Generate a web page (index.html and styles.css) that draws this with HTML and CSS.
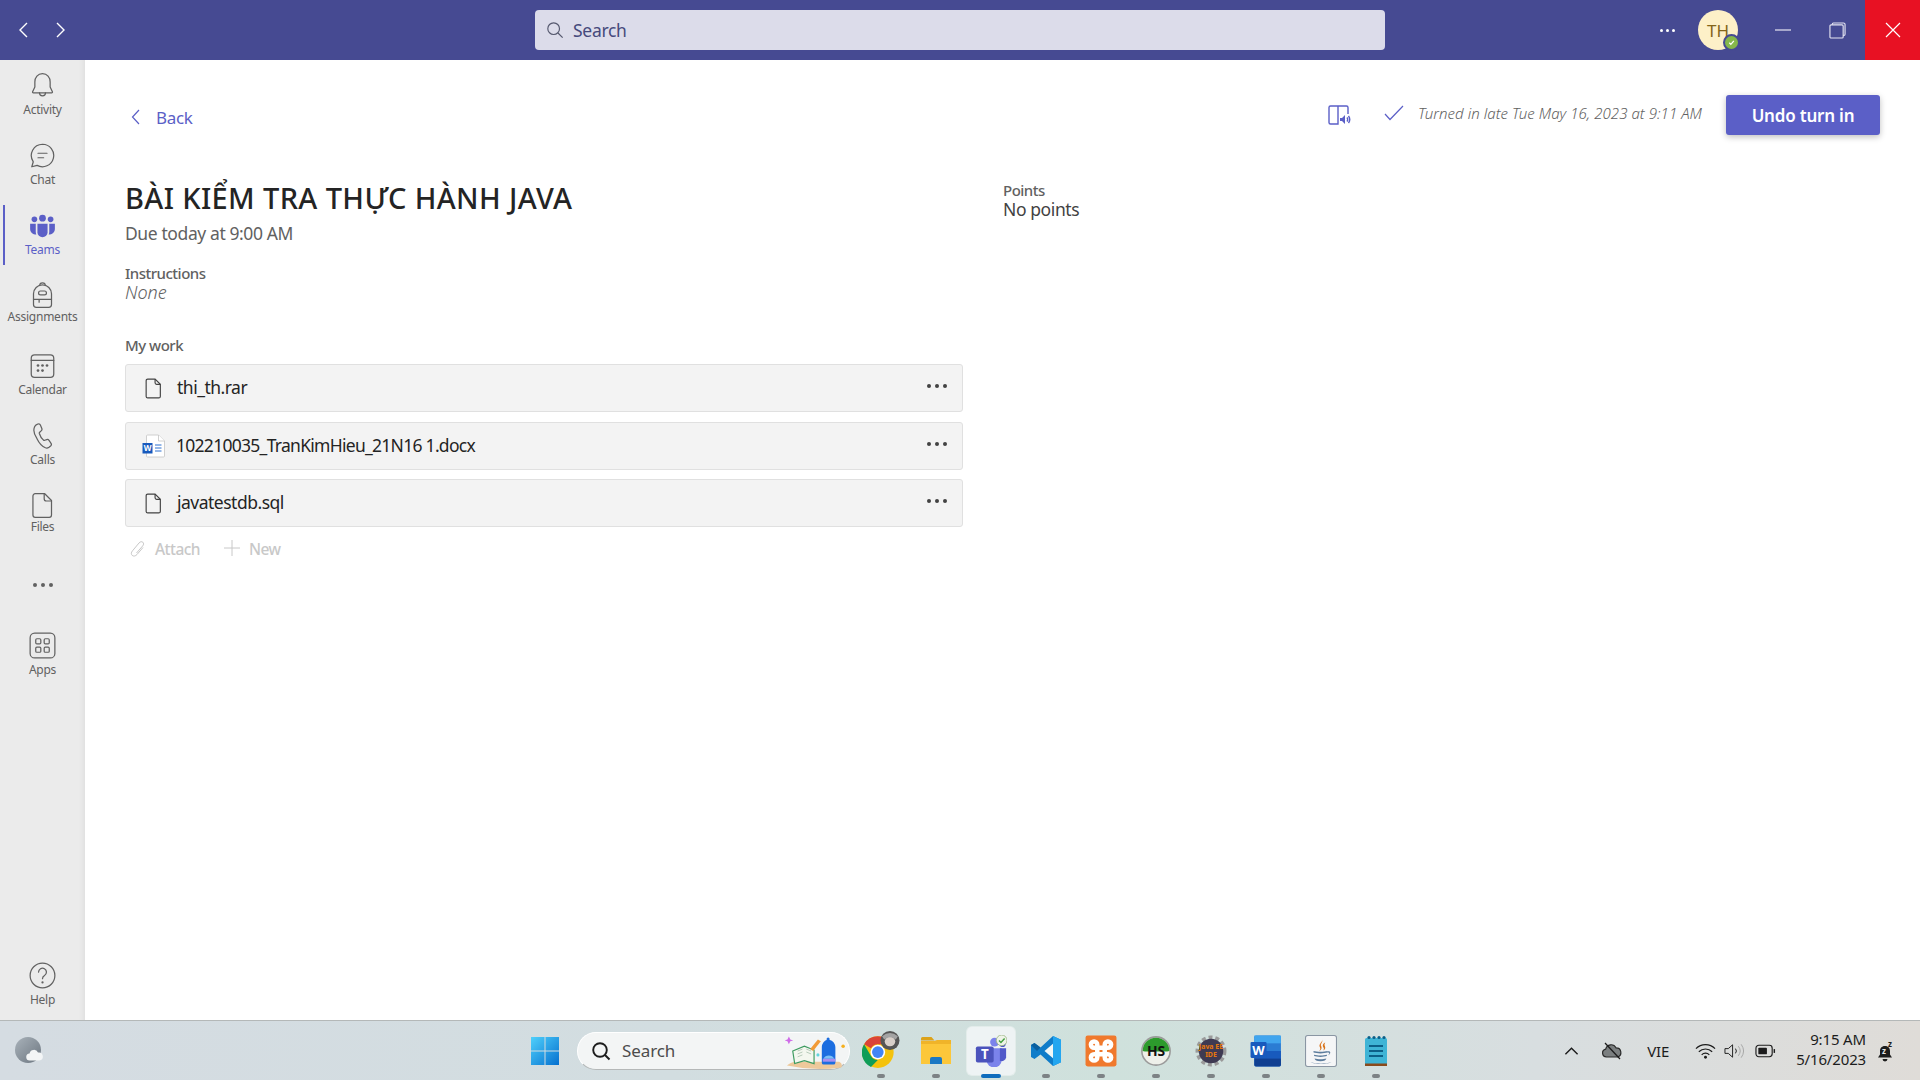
FILE: index.html
```html
<!DOCTYPE html>
<html lang="en">
<head>
<meta charset="utf-8">
<title>Assignment</title>
<link rel="stylesheet" href="styles.css">
</head>
<body>
<div class="window">
  <header class="topbar">
    <div class="nav">
      <svg class="nav-ic" viewBox="0 0 16 24"><path d="M11 5 L4 12 L11 19"/></svg>
      <svg class="nav-ic" viewBox="0 0 16 24"><path d="M5 5 L12 12 L5 19"/></svg>
    </div>
    <div class="search">
      <svg class="search-ic" viewBox="0 0 20 20"><circle cx="8.5" cy="8.5" r="6.5"/><path d="M13.3 13.3 L18.5 18.5"/></svg>
      <span>Search</span>
    </div>
    <div class="win-right">
      <div class="dots-top"><i></i><i></i><i></i></div>
      <div class="avatar">TH<span class="presence"><svg viewBox="0 0 10 10"><path d="M2.5 5.2 L4.3 7 L7.6 3.2"/></svg></span></div>
      <div class="ctl min"><svg viewBox="0 0 16 16"><path d="M0 8h16"/></svg></div>
      <div class="ctl"><svg viewBox="0 0 18 18"><path d="M3.5 3V2.2A1.2 1.2 0 0 1 4.7 1h10.6A1.7 1.7 0 0 1 17 2.7V13a1.2 1.2 0 0 1-1.2 1.2H15"/><rect x="1" y="3" width="14" height="14" rx="1.2"/></svg></div>
      <div class="ctl close"><svg viewBox="0 0 16 16"><path d="M1 1L15 15M15 1L1 15"/></svg></div>
    </div>
  </header>

  <div class="middle">
    <nav class="rail">
      <div class="rail-item"><svg class="rail-ic" viewBox="0 0 24 24"><path d="M12 1.5c-4.2 0-6.8 3.2-6.8 7.3v4.6l-2 4.1c-.2.5.1 1 .6 1h16.4c.5 0 .8-.5.6-1l-2-4.1V8.800c0-4.100-2.600-7.300-6.800-7.300z"/><path d="M9.300 18.500a2.700 2.700 0 0 0 5.400 0"/></svg><span>Activity</span></div>
      <div class="rail-item"><svg class="rail-ic" viewBox="0 0 24 24"><path d="M12 2a10 10 0 1 1-4.800 18.800L2.500 22l1.300-4.400A10 10 0 0 1 12 2z"/><path d="M8 10h8M8 14h5"/></svg><span>Chat</span></div>
      <div class="rail-item active"><svg class="rail-ic filled" viewBox="0 0 24 24"><circle cx="12" cy="5.500" r="3"/><circle cx="4.800" cy="6.500" r="2.500"/><circle cx="19.200" cy="6.500" r="2.500"/><path d="M7.500 10.500h9v7.500a4.500 4.500 0 0 1-9 0z"/><path d="M1 10.500h5v7c0 1 .2 1.800.5 2.500C3.500 20 1 18 1 15z"/><path d="M23 10.500h-5v7c0 1-.2 1.800-.5 2.500 3 0 5.500-2 5.500-5z"/></svg><span>Teams</span></div>
      <div class="rail-item tight"><svg class="rail-ic" viewBox="0 0 24 24"><path d="M4 10.500a8 8 0 0 1 16 0V20a2.500 2.500 0 0 1-2.500 2.500h-11A2.500 2.500 0 0 1 4 20z"/><path d="M9.500 3.200a2.500 2.500 0 0 1 5 0"/><rect x="8.500" y="8" width="7" height="3.500" rx="1.700"/><path d="M4 15.500h16M9 15.500v2.500"/></svg><span>Assignments</span></div>
      <div class="rail-item"><svg class="rail-ic" viewBox="0 0 24 24"><rect x="2" y="2.500" width="20" height="20" rx="3"/><path d="M2 7.500h20"/><g class="ic-dots"><circle cx="8" cy="12" r="1.200"/><circle cx="12" cy="12" r="1.200"/><circle cx="16" cy="12" r="1.200"/><circle cx="8" cy="16.500" r="1.200"/><circle cx="12" cy="16.500" r="1.200"/></g></svg><span>Calendar</span></div>
      <div class="rail-item"><svg class="rail-ic" viewBox="0 0 24 24"><path d="M6 2.800l1.900-1c.9-.4 1.800-.1 2.200.8l1.300 3.100c.3.800.1 1.500-.4 2l-1.500 1.400c-.3.300-.4.700-.3 1.100.5 1.700 2.300 4.700 3.700 5.900.3.200.7.300 1.100.1l1.800-.6c.8-.2 1.500 0 2 .7l1.800 2.700c.5.800.3 1.700-.4 2.300l-1.400 1.100c-1 .7-2.200.9-3.200.5-3.200-1.400-5.800-4.600-7.500-8.100C4.500 11 3.700 7.300 4.900 4.500c.2-.7.600-1.300 1.100-1.700z"/></svg><span>Calls</span></div>
      <div class="rail-item tight"><svg class="rail-ic" viewBox="0 0 24 24"><path d="M5.500 1.500h8.500l6 6v13a2 2 0 0 1-2 2H5.500a2 2 0 0 1-2-2v-17a2 2 0 0 1 2-2z"/><path d="M13.500 1.500v4.500a2 2 0 0 0 2 2H20"/></svg><span>Files</span></div>
      <div class="rail-item"><div class="dots-rail"><i></i><i></i><i></i></div></div>
      <div class="rail-item"><svg class="rail-ic" viewBox="0 0 24 24"><rect x="1" y="1" width="22" height="22" rx="4"/><rect x="6" y="6" width="4.500" height="4.500" rx="1"/><rect x="13.500" y="6" width="4.500" height="4.500" rx="1"/><rect x="6" y="13.500" width="4.500" height="4.500" rx="1"/><rect x="13.500" y="13.500" width="4.500" height="4.500" rx="1"/></svg><span>Apps</span></div>
      <div class="rail-item help"><svg class="rail-ic" viewBox="0 0 24 24"><circle cx="12" cy="12" r="11"/><path d="M8.500 9a3.500 3.500 0 1 1 5.300 3c-1.200.7-1.800 1.400-1.800 2.800"/><circle class="ic-solid" cx="12" cy="18.200" r="1"/></svg><span>Help</span></div>
    </nav>

    <main class="content">
      <div class="head">
        <div class="back">
          <svg class="back-ic" viewBox="0 0 12 18"><path d="M9 2 L2.500 9 L9 16"/></svg>
          <span>Back</span>
        </div>
        <div class="head-right">
          <svg class="reader-ic" viewBox="0 0 24 24"><path d="M11 21H3.500A1.500 1.500 0 0 1 2 19.500v-15A1.500 1.500 0 0 1 3.500 3H11v18zM11 3h8.500A1.500 1.500 0 0 1 21 4.500V11"/><path class="solid" d="M13 15h2l3-3v9l-3-3h-2z"/><path d="M20 14.500a3.500 3.500 0 0 1 0 4M21.500 13a6 6 0 0 1 0 7"/></svg>
          <svg class="check-ic" viewBox="0 0 20 16"><path d="M1 9 L6 14.500 L19 1"/></svg>
          <span class="turned">Turned in late Tue May 16, 2023 at 9:11 AM</span>
          <button class="undo">Undo turn in</button>
        </div>
      </div>

      <div class="body">
        <section class="left">
          <h1>BÀI KIỂM TRA THỰC HÀNH JAVA</h1>
          <p class="due">Due today at 9:00 AM</p>
          <p class="label instr">Instructions</p>
          <p class="none">None</p>
          <p class="label mywork">My work</p>
          <div class="files">
            <div class="file">
              <svg class="file-ic" viewBox="0 0 16 20"><path d="M2.500 1h7l5 5v11.500a1.500 1.500 0 0 1-1.500 1.500H2.500A1.500 1.500 0 0 1 1 17.500v-15A1.500 1.500 0 0 1 2.500 1z"/><path d="M9.500 1v3.500A1.500 1.500 0 0 0 11 6h3.500"/></svg>
              <span class="fname">thi_th.rar</span>
              <div class="dots-file"><i></i><i></i><i></i></div>
            </div>
            <div class="file">
              <svg class="word-ic" viewBox="0 0 24 24"><path class="pg" d="M5.500 1h11l6 6v15a1 1 0 0 1-1 1h-16a1 1 0 0 1-1-1V2a1 1 0 0 1 1-1z"/><path class="pg" d="M16.500 1v6h6"/><path class="ln" d="M13 11h6.500M13 14h6.500M13 17h6.500"/><rect class="bx" x="0.500" y="9" width="10" height="10.500"/><text class="w" x="5.500" y="17.200">W</text></svg>
              <span class="fname long">102210035_TranKimHieu_21N16 1.docx</span>
              <div class="dots-file"><i></i><i></i><i></i></div>
            </div>
            <div class="file">
              <svg class="file-ic" viewBox="0 0 16 20"><path d="M2.500 1h7l5 5v11.500a1.500 1.500 0 0 1-1.500 1.500H2.500A1.500 1.500 0 0 1 1 17.500v-15A1.500 1.500 0 0 1 2.500 1z"/><path d="M9.500 1v3.500A1.500 1.500 0 0 0 11 6h3.500"/></svg>
              <span class="fname">javatestdb.sql</span>
              <div class="dots-file"><i></i><i></i><i></i></div>
            </div>
          </div>
          <div class="actions">
            <svg class="attach-ic" viewBox="0 0 16 18"><path d="M13 7.500 L7 14.500c-1.500 1.700-3.500 2-4.800.9C1 14.300 1 12.500 2.500 10.800L9 3c1.200-1.400 2.700-1.700 3.800-.8 1.100.9 1 2.400-.1 3.700L6.500 13"/></svg>
            <span class="act-text">Attach</span>
            <svg class="plus-ic" viewBox="0 0 16 16"><path d="M8 0v16M0 8h16"/></svg>
            <span class="act-text">New</span>
          </div>
        </section>
        <aside class="right">
          <p class="label">Points</p>
          <p class="points">No points</p>
        </aside>
      </div>
    </main>
  </div>

  <footer class="taskbar">
    <div class="tb-left">
      <svg class="weather" viewBox="0 0 28 28"><defs><linearGradient id="wg" x1="0" y1="0" x2="1" y2="1"><stop offset="0" stop-color="#a9b2ba"/><stop offset="1" stop-color="#6c7680"/></linearGradient></defs><circle cx="13" cy="13" r="13" fill="url(#wg)"/><path d="M15 23.500a3.500 3.500 0 0 1-.5-7 4.500 4.500 0 0 1 8.500-1 4 4 0 0 1 1.500 8z" fill="#f3f5f6"/></svg>
    </div>
    <div class="tb-center">
      <div class="tile"><svg class="app start" viewBox="0 0 30 30"><defs><linearGradient id="st" x1="0" y1="0" x2="1" y2="1"><stop offset="0" stop-color="#4fd0fb"/><stop offset="1" stop-color="#0570cf"/></linearGradient></defs><path fill="url(#st)" d="M1 1h13.500v13.500H1zM15.500 1H29v13.500H15.500zM1 15.500h13.500V29H1zM15.500 15.500H29V29H15.500z"/></svg></div>
      <div class="tb-search">
        <svg class="tbs-ic" viewBox="0 0 20 20"><circle cx="9" cy="9" r="6.800"/><path d="M14 14 L18.500 18.500"/></svg>
        <span class="tbs-text">Search</span>
        <svg class="tbs-art" viewBox="0 0 64 36"><path d="M2 32 Q6 28 12 28 H56 Q60 30 58 34 Q30 38 2 32z" fill="#eec99b"/><path d="M8 17 L20 12 L30 16 L30 30 L20 27 L10 30z" fill="#f4f7ef" stroke="#3c9a5f" stroke-width="1.200"/><path d="M13 17l5-2M13 20l5-2M13 23l5-2M22 15l5 2M22 18l5 2" stroke="#9ab5a0" stroke-width=".7" fill="none"/><path d="M26 15 L34 5 L37 7 L29 17z" fill="#f29b37"/><path d="M4 2 l1.500 3 3 1-3 1-1.500 3-1.500-3-3-1 3-1z" fill="#cf6ce8"/><circle cx="34" cy="21" r="1.600" fill="#62d4dd"/><circle cx="60" cy="12" r="1.800" fill="#f6b01d"/><path d="M38 29V13c0-4 3-7 5-7.500V4a2 2 0 0 1 3 0v1.500c3 .5 6 3.500 6 7.500v16a2 2 0 0 1-2 2H40a2 2 0 0 1-2-2z" fill="#1c6ee0"/><path d="M39.500 25a6.500 6.500 0 0 1 11.500 0z" fill="#7cc0f5"/><rect x="39" y="25" width="13" height="3" fill="#a98ef0"/></svg>
      </div>
      <div class="tile run">
        <svg class="app chrome" viewBox="0 0 36 36"><circle cx="15" cy="20" r="15" fill="#f4c20d"/><path d="M15 5a15 15 0 0 1 13 7.500H15a7.500 7.500 0 0 0-6.500 3.800L2 12.500A15 15 0 0 1 15 5z" fill="#db4437"/><path d="M2 12.500l6.500 11.200a7.500 7.500 0 0 0 6.500 3.800L8.500 34A15 15 0 0 1 2 12.500z" fill="#0f9d58"/><circle cx="15" cy="20" r="7" fill="#fff"/><circle cx="15" cy="20" r="5.500" fill="#4285f4"/><circle cx="26.500" cy="9" r="9" fill="#555"/><ellipse cx="26.500" cy="10" rx="5" ry="4.500" fill="#d8cfc9"/><path d="M19 5 Q26.500 -1 34 5 L32 8 Q26.500 4 21 8z" fill="#a3a3a3"/></svg>
      </div>
      <div class="tile run">
        <svg class="app" viewBox="0 0 32 32"><path d="M1 3.500A1.500 1.500 0 0 1 2.500 2h9l3 3.500H1z" fill="#dca21a"/><path d="M1 6h30v23H1z" fill="#fcc73a"/><path d="M1 6h13l3-1h14v4H1z" fill="#f0b429"/><path d="M10 29v-5a2 2 0 0 1 2-2h8a2 2 0 0 1 2 2v5z" fill="#1b78c4"/></svg>
      </div>
      <div class="tile run open">
        <svg class="app" viewBox="0 0 36 36"><circle cx="22" cy="8" r="5" fill="#7b83eb"/><circle cx="31" cy="10" r="3.500" fill="#5059c9"/><path d="M13 15h17v13a8 8 0 0 1-17 0z" fill="#7b83eb"/><path d="M28 15h7v10a5 5 0 0 1-7 4z" fill="#5059c9"/><rect x="1" y="13" width="20" height="18" rx="2" fill="#4b53bc"/><text class="t-t" x="11" y="27">T</text><circle cx="30" cy="6" r="6" fill="#eef3e8" stroke="#9fb98a"/><path d="M27 6.200l2.200 2.200L33.300 4" fill="none" stroke="#3f9f3f" stroke-width="1.600"/></svg>
      </div>
      <div class="tile run">
        <svg class="app" viewBox="0 0 32 32"><path d="M23 1 L31 4.800 V27.200 L23 31 L10.500 19.500 L4.500 24 L1 22 V10 L4.500 8 L10.500 12.500z" fill="#0f7cc9"/><path d="M23 8.800 L14.500 16 L23 23.200z" fill="#f1f7f7"/><path d="M23 1 L31 4.800 V27.200 L23 31z" fill="#23a6f0"/><path d="M1 10 L4.500 8 L10.500 12.500 L7 16 z" fill="#0a5f9e"/></svg>
      </div>
      <div class="tile run">
        <svg class="app" viewBox="0 0 30 30"><rect x="0.500" y="0.500" width="29" height="29" rx="2" fill="#f0792d"/><path d="M11.500 11.500V9a3 3 0 1 0-3 3H21.500a3 3 0 1 0-3-3V21a3 3 0 1 0 3-3H8.500a3 3 0 1 0 3 3z" fill="none" stroke="#fff" stroke-width="4.200"/></svg>
      </div>
      <div class="tile run">
        <svg class="app" viewBox="0 0 30 30"><circle cx="15" cy="15" r="14" fill="#9a9a9a"/><circle cx="15" cy="15" r="12.500" fill="#eef0ea"/><path d="M2.500 15a12.500 12.500 0 0 1 25 0l-2 .5h-21z" fill="#2c9a2c"/><text class="hs" x="15" y="20">HS</text></svg>
      </div>
      <div class="tile run">
        <svg class="app" viewBox="0 0 30 30"><circle cx="15" cy="15" r="12" fill="none" stroke="#9a9a9a" stroke-width="5" stroke-dasharray="3.500 2.500"/><circle cx="15" cy="15" r="11.500" fill="#3e3a52"/><text class="je" x="15" y="13.500">Java EE</text><text class="je" x="15" y="21">IDE</text></svg>
      </div>
      <div class="tile run">
        <svg class="app" viewBox="0 0 30 30"><rect x="4" y="0.500" width="25" height="29" rx="1.500" fill="#2b7cd3"/><rect x="4" y="0.500" width="25" height="7.300" fill="#41a5ee"/><rect x="4" y="15" width="25" height="7.300" fill="#185abd"/><path d="M4 22h25v6a1.500 1.500 0 0 1-1.500 1.500h-22A1.500 1.500 0 0 1 4 28z" fill="#103f91"/><rect x="0.500" y="6.500" width="15" height="15" rx="1" fill="#185abd"/><text class="wd" x="8" y="18.500">W</text></svg>
      </div>
      <div class="tile run">
        <svg class="app" viewBox="0 0 30 30"><rect x="0.500" y="0.500" width="29" height="29" rx="2" fill="#f5f6f7" stroke="#8a96a3"/><path d="M16 3c2 3-4 5-2 8.500 1 1.500-.3 3-.8 3.500 3-1.500 2.500-3.500 1.800-5 -.8-2 2.500-3.500 1-7zM19 7c-3 1.500-2.500 3.500-1.500 5 .5 1 0 2-.5 2.500 2-1 2.500-2.500 1.500-4.500-.5-1 0-2 .5-3z" fill="#d9731a"/><path d="M8 15c3 1 10 1 13 0v1.500c-3 1-10 1-13 0zM8.500 18.500c3 1 9 1 12 0v1.300c-3 1-9 1-12 0zM9 22c3 1 8 1 11 0 0 1.500-2 2.500-5.500 2.500S9 23.500 9 22zM21 15.500c3-1 4 2 .5 3.500 2-1.500 1.500-3-.5-2.500zM5 25.500c6 1.500 14 1.500 20 0-5 2-15 2-20 0z" fill="#5c7c9c"/></svg>
      </div>
      <div class="tile run">
        <svg class="app" viewBox="0 0 24 32"><rect x="1" y="3" width="22" height="27" rx="1.500" fill="#3fb4d6"/><rect x="1" y="28.500" width="22" height="2.500" fill="#8a4a1c"/><g fill="#0c5f88"><circle cx="5" cy="2.500" r="1.600"/><circle cx="10" cy="2.500" r="1.600"/><circle cx="15" cy="2.500" r="1.600"/><circle cx="20" cy="2.500" r="1.600"/><rect x="5" y="10" width="14" height="2"/><rect x="5" y="15" width="14" height="2"/><rect x="5" y="20" width="14" height="2"/></g></svg>
      </div>
    </div>
    <div class="tb-right">
      <svg class="tray chev" viewBox="0 0 16 10"><path d="M1.500 8.500 L8 2 L14.500 8.500"/></svg>
      <svg class="tray cloud" viewBox="0 0 22 18"><path class="cl" d="M5.500 15a4 4 0 0 1-.8-7.900 5.500 5.500 0 0 1 10.300-1.300A4.700 4.700 0 0 1 16.500 15z"/><path d="M4 1 L19 17"/></svg>
      <span class="lang">VIE</span>
      <svg class="tray wifi" viewBox="0 0 22 18"><path d="M1 6.500a14 14 0 0 1 20 0M4 9.800a10 10 0 0 1 14 0M7 13a5.500 5.500 0 0 1 8 0"/><circle class="w-dot" cx="11" cy="15.500" r="1.500"/></svg>
      <svg class="tray vol" viewBox="0 0 22 18"><path d="M1 6.500h3.500L9 2.500v13L4.500 11.500H1z"/><path d="M12 6.500a4 4 0 0 1 0 5"/><path class="faint" d="M15 4a8 8 0 0 1 0 10M18 2a12 12 0 0 1 0 14"/></svg>
      <svg class="tray batt" viewBox="0 0 22 14"><rect x="1" y="1" width="17" height="12" rx="3"/><rect class="fill" x="3.500" y="3.500" width="9" height="7" rx="1"/><path class="fill" d="M19.500 5h1.500v4h-1.500z"/></svg>
      <div class="clock"><span>9:15 AM</span><span>5/16/2023</span></div>
      <svg class="tray bell" viewBox="0 -4 18 28"><path class="bl" d="M9 5c-3.500 0-5 2.500-5 5v3.500L2 16.500h14l-2-3V10c0-2.500-1.500-5-5-5z"/><path class="bl" d="M6.500 18a2.500 2.500 0 0 0 5 0z"/><text class="zz" x="6" y="13">z</text><text class="zz2" x="12" y="6">z</text></svg>
    </div>
  </footer>
</div>
</body>
</html>
```

FILE: styles.css
```css
* { box-sizing: border-box; }
html, body { margin: 0; height: 100%; }
body { font-family: "Noto Sans", "Open Sans", sans-serif; color: #242424; overflow: hidden; }
p, h1 { margin: 0; }
svg { display: block; flex: none; }

.window { width: 1920px; height: 1080px; display: flex; flex-direction: column; }

/* title bar */
.topbar { height: 60px; flex: none; background: #464a92; display: grid; grid-template-columns: 535px 850px 1fr; align-items: center; }
.nav { display: flex; gap: 20px; padding-left: 16px; }
.nav-ic { width: 16px; height: 24px; fill: none; stroke: #fff; stroke-width: 1.4; }
.search { height: 40px; background: #dcdcea; border-radius: 4px; display: flex; align-items: center; gap: 9px; padding-left: 11px; color: #464a7c; font-size: 17.5px; letter-spacing: -.3px; }
.search-ic { width: 18px; height: 18px; fill: none; stroke: #55586e; stroke-width: 1.3; }
.win-right { display: flex; align-items: center; height: 60px; justify-content: flex-end; }
.dots-top { display: flex; gap: 3px; margin-right: 23px; }
.dots-top i { width: 3px; height: 3px; border-radius: 50%; background: #fff; }
.avatar { position: relative; width: 40px; height: 40px; border-radius: 50%; background: #fdf0c8; color: #83651b; font-size: 17px; display: flex; align-items: center; justify-content: center; margin-right: 17px; }
.presence { position: absolute; right: -1px; bottom: 0; width: 13px; height: 13px; border-radius: 50%; background: #86b84a; border: 2px solid #464a92; box-sizing: content-box; margin: -1px; display: flex; align-items: center; justify-content: center; }
.presence svg { width: 9px; height: 9px; fill: none; stroke: #fff; stroke-width: 1.4; }
.ctl { width: 55px; height: 60px; display: flex; align-items: center; justify-content: center; }
.ctl svg { width: 17px; height: 17px; fill: none; stroke: #e6e6f2; stroke-width: 1.2; }
.ctl.min svg { width: 16px; height: 16px; }
.close { background: #e81123; }
.close svg { width: 16px; height: 16px; stroke: #fff; }

/* middle */
.middle { flex: 1; min-height: 0; display: flex; }
.rail { width: 85px; flex: none; background: #ebebeb; box-shadow: inset -6px 0 5px -4px rgba(0,0,0,.05); padding: 5px 0 5px; display: flex; flex-direction: column; gap: 10px; }
.rail-item { position: relative; height: 60px; padding-bottom: 1px; display: flex; flex-direction: column; align-items: center; justify-content: center; color: #616161; font-size: 12px; line-height: 17px; letter-spacing: -.25px; }
.tight span { margin: -3px 0 3px; }
.rail-ic { width: 27px; height: 27px; margin-bottom: 2px; fill: none; stroke: #616161; stroke-width: 1.1; stroke-linejoin: round; stroke-linecap: round; }
.ic-dots, .ic-solid { fill: #616161; stroke: none; }
.rail-ic.filled { fill: #5b5fc7; stroke: none; }
.active { color: #5b5fc7; }
.active::before { content: ""; position: absolute; left: 3px; top: 0; bottom: 0; width: 2px; background: #5b5fc7; }
.help { margin-top: auto; }
.dots-rail { display: flex; gap: 4px; }
.dots-rail i { width: 4px; height: 4px; border-radius: 50%; background: #616161; }

/* content */
.content { flex: 1; min-width: 0; background: #fff; padding: 35px 40px 0; }
.head { height: 40px; display: flex; align-items: center; justify-content: space-between; }
.back { display: flex; align-items: center; gap: 14px; color: #5b5fc7; font-size: 17px; letter-spacing: -.3px; padding: 4px 0 0 5px; }
.back-ic { width: 12px; height: 18px; fill: none; stroke: #5b5fc7; stroke-width: 1.2; }
.head-right { display: flex; align-items: center; }
.reader-ic { width: 24px; height: 24px; fill: none; stroke: #5b5fc7; stroke-width: 1.4; margin-right: 33px; }
.reader-ic .solid { fill: #5b5fc7; stroke: none; }
.check-ic { width: 20px; height: 16px; fill: none; stroke: #5b5fc7; stroke-width: 1.2; margin: -4px 14px 0 0; }
.turned { font-style: italic; font-size: 15px; font-weight: 300; color: #616161; letter-spacing: .06px; margin: -4px 24px 0 0; }
.undo { width: 154px; height: 40px; background: #5b5fc7; color: #fff; border: 0; border-radius: 3px; font: 600 17px "Noto Sans", sans-serif; letter-spacing: -.2px; box-shadow: 0 2px 6px rgba(0,0,0,.25); }

.body { display: grid; grid-template-columns: 838px 1fr; column-gap: 40px; margin-top: 43px; }
h1 { font-size: 29px; line-height: 40px; font-weight: 500; color: #242424; letter-spacing: .37px; }
.due { font-size: 17.5px; line-height: 24px; color: #616161; margin-top: 3px; letter-spacing: -.4px; }
.label { font-size: 15px; line-height: 20px; font-weight: 500; color: #616161; letter-spacing: -.5px; }
.instr { margin-top: 18px; }
.none { font-size: 18px; line-height: 20px; margin-top: -1px; font-style: italic; font-weight: 300; color: #616161; letter-spacing: -.05px; }
.mywork { margin-top: 33px; margin-bottom: 9px; }
.files { display: flex; flex-direction: column; gap: 9.5px; }
.file { height: 48px; background: #f3f3f3; border: 1px solid #e0e0e0; border-radius: 3px; display: flex; align-items: center; padding: 0 15px 0 18px; }
.file-ic { width: 17px; height: 21px; fill: none; stroke: #424242; stroke-width: 1.1; margin: 0 15px 0 1px; }
.word-ic { width: 24px; height: 24px; margin: 0 10px 0 -2px; }
.pg { fill: #fff; stroke: #c4c4c4; stroke-width: .8; }
.ln { fill: none; stroke: #2b6fd0; stroke-width: 1; }
.bx { fill: #185abd; }
.w { fill: #fff; font-size: 8px; font-weight: 700; text-anchor: middle; }
.fname { flex: 1; font-size: 17.5px; line-height: 22px; margin-top: -2px; letter-spacing: -.5px; color: #242424; }
.fname.long { letter-spacing: -.72px; }
.dots-file { display: flex; gap: 4px; margin-top: -4px; }
.dots-file i { width: 4px; height: 4px; border-radius: 50%; background: #424242; }
.actions { height: 24px; margin-top: 10px; display: flex; align-items: center; color: #c8c8c8; font-size: 15.5px; font-weight: 500; padding-left: 5px; letter-spacing: -.55px; }
.attach-ic { width: 16px; height: 18px; fill: none; stroke: #c8c8c8; stroke-width: 1; margin-right: 9px; }
.plus-ic { width: 16px; height: 16px; fill: none; stroke: #c8c8c8; stroke-width: 1; margin: -2px 9px 0 24px; }
.right { padding-top: 2px; }
.points { font-size: 17.5px; line-height: 20px; margin-top: -1px; color: #424242; letter-spacing: -.4px; }

/* taskbar */
.taskbar { height: 60px; flex: none; border-top: 1px solid #b4b8b8; background: linear-gradient(90deg, #d5dce2 0%, #d2dde0 35%, #cfe1dc 58%, #d8dee0 80%, #dfdcd8 100%); display: grid; grid-template-columns: 1fr auto 1fr; align-items: center; }
.tb-left { padding-left: 15px; }
.weather { width: 28px; height: 28px; }
.tb-center { display: flex; align-items: center; height: 59px; margin-left: .5px; }
.tile { position: relative; width: 55px; height: 48px; display: flex; align-items: center; justify-content: center; }
.app { width: 32px; height: 32px; }
.app.start { width: 30px; height: 30px; }
.app.chrome { width: 38px; height: 38px; margin-top: -2px; }
.run::after { content: ""; position: absolute; left: 50%; bottom: -3px; width: 8px; height: 4px; margin-left: -4px; border-radius: 2px; background: #7d8285; }
.open::before { content: ""; position: absolute; left: 3.5px; right: 3.5px; top: 0; bottom: 0; background: #eef3f4; border-radius: 5px; box-shadow: 0 0 0 1px rgba(255,255,255,.4); }
.open .app { position: relative; }
.open::after { width: 20px; margin-left: -10px; background: #0f6cbd; }
.tb-search { width: 273px; height: 38px; margin: 0 3px 0 4.500px; border-radius: 19px; background: #f3f5f5; border: 1px solid #fff; border-bottom-color: #b5b8b8; display: flex; align-items: center; padding: 0 13px; color: #4c4c4c; font-size: 17px; letter-spacing: -.1px; position: relative; }
.tbs-ic { width: 20px; height: 20px; fill: none; stroke: #1c1c1c; stroke-width: 1.9; margin-right: 11px; }
.tbs-text { flex: 1; }
.tbs-art { position: absolute; right: 2px; top: 1px; width: 62px; height: 36px; }
.tb-right { display: flex; align-items: center; justify-content: flex-end; color: #1c1c1c; }
.tray { fill: none; stroke: #1c1c1c; stroke-width: 1.2; }
.chev { width: 15px; height: 10px; stroke-width: 1.5; margin-right: 22px; }
.cloud { width: 22px; height: 18px; margin-right: 23px; }
.cl { fill: #7b7f80; stroke: #2a2a2a; }
.lang { font-size: 15px; width: 24px; margin-right: 25px; text-align: center; letter-spacing: -.2px; }
.wifi { width: 21px; height: 18px; margin-right: 8px; }
.w-dot { fill: #1c1c1c; stroke: none; }
.vol { width: 21px; height: 18px; stroke-width: 1; margin-right: 10px; }
.faint { stroke: #a5a5a5; }
.batt { width: 21px; height: 14px; }
.fill { fill: #1c1c1c; stroke: none; }
.clock { display: flex; flex-direction: column; align-items: flex-end; margin: -3px 10px 0 20px; font-size: 15px; line-height: 20px; letter-spacing: -.15px; }
.bell { width: 18px; height: 28px; margin-right: 26px; stroke: none; }
.bl { fill: #1c1c1c; }
.zz { fill: #e4e4e4; font-size: 8px; font-weight: 700; }
.zz2 { fill: #1c1c1c; font-size: 8px; font-weight: 700; }
.t-t { fill: #fff; font-size: 15px; font-weight: 700; text-anchor: middle; }
.hs { fill: #111; font-size: 13px; font-weight: 700; text-anchor: middle; }
.je { fill: #e8780c; font-size: 6.500px; font-weight: 700; text-anchor: middle; }
.wd { fill: #fff; font-size: 12px; font-weight: 700; text-anchor: middle; }
```
